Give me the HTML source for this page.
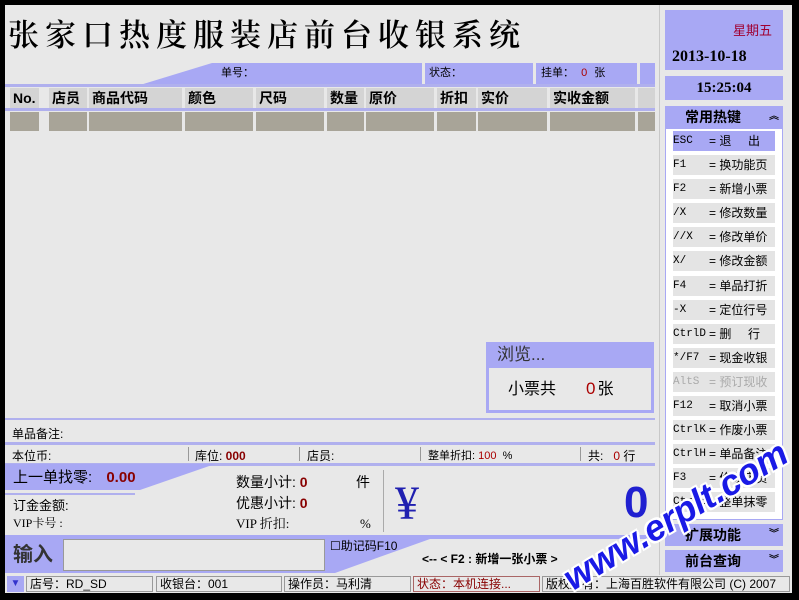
<!DOCTYPE html>
<html><head><meta charset="utf-8"><style>
*{margin:0;padding:0;box-sizing:border-box}
body{width:799px;height:600px;background:#000;position:relative;overflow:hidden;font-family:"Liberation Sans","Noto Sans CJK SC",sans-serif;font-size:12px;color:#000}
.a{position:absolute}
.p{background:#a8a8f4}
.g{background:#d4d4d4}
.d{background:#a8a498}
.hd{font-weight:bold;font-size:14px;line-height:20px;padding-left:3px}
.ln{height:3px;background:#b0b0ee}
.k{position:absolute;left:673px;width:102px;height:20px;background:#e4e4e4;font-size:11px;line-height:20px;font-family:"Liberation Mono","Noto Sans CJK SC",monospace}
.k span{position:absolute;left:36px;font-family:"Liberation Sans","Noto Sans CJK SC",sans-serif;font-size:12px}
.st{position:absolute;top:576px;height:16px;border:1px solid #999;font-size:12px;line-height:14px;padding-left:3px;background:#e8e8e8;white-space:nowrap;overflow:hidden}
</style></head><body>
<div class="a" style="left:5px;top:5px;width:787px;height:588px;background:#e8e8e8"></div>
<div class="a" style="left:659px;top:5px;width:1px;height:570px;background:#c8c8c8"></div>
<div class="a" style="left:8px;top:14px;font-family:'Noto Serif CJK SC',serif;font-weight:600;font-size:31px;letter-spacing:6px;line-height:38px;white-space:nowrap">张家口热度服装店前台收银系统</div>
<svg class="a" style="left:140px;top:63px" width="80" height="22"><polygon points="72,0 78,0 78,22 0,22" fill="#a8a8f4"/></svg>
<div class="a p" style="left:218px;top:63px;width:204px;height:21px;font-size:11px;line-height:21px;padding-left:3px">单号：</div>
<div class="a p" style="left:425px;top:63px;width:108px;height:21px;font-size:11px;line-height:21px;padding-left:4px">状态：</div>
<div class="a p" style="left:536px;top:63px;width:101px;height:21px;font-size:11px;line-height:21px;padding-left:5px">挂单： <span style="color:#a00;margin:0 4px">0</span> 张</div>
<div class="a p" style="left:640px;top:63px;width:15px;height:21px"></div>
<div class="a ln" style="left:5px;top:84px;width:650px"></div>
<div class="a g hd" style="left:10px;top:88px;width:29px">No.</div>
<div class="a g hd" style="left:49px;top:88px;width:38px">店员</div>
<div class="a g hd" style="left:89px;top:88px;width:93px">商品代码</div>
<div class="a g hd" style="left:185px;top:88px;width:68px">颜色</div>
<div class="a g hd" style="left:256px;top:88px;width:68px">尺码</div>
<div class="a g hd" style="left:327px;top:88px;width:37px">数量</div>
<div class="a g hd" style="left:366px;top:88px;width:68px">原价</div>
<div class="a g hd" style="left:437px;top:88px;width:39px">折扣</div>
<div class="a g hd" style="left:478px;top:88px;width:69px">实价</div>
<div class="a g hd" style="left:550px;top:88px;width:85px">实收金额</div>
<div class="a g" style="left:638px;top:88px;width:17px;height:20px"></div>
<div class="a ln" style="left:5px;top:108px;width:650px"></div>
<div class="a d" style="left:10px;top:112px;width:29px;height:19px"></div>
<div class="a d" style="left:49px;top:112px;width:38px;height:19px"></div>
<div class="a d" style="left:89px;top:112px;width:93px;height:19px"></div>
<div class="a d" style="left:185px;top:112px;width:68px;height:19px"></div>
<div class="a d" style="left:256px;top:112px;width:68px;height:19px"></div>
<div class="a d" style="left:327px;top:112px;width:37px;height:19px"></div>
<div class="a d" style="left:366px;top:112px;width:68px;height:19px"></div>
<div class="a d" style="left:437px;top:112px;width:39px;height:19px"></div>
<div class="a d" style="left:478px;top:112px;width:69px;height:19px"></div>
<div class="a d" style="left:550px;top:112px;width:85px;height:19px"></div>
<div class="a d" style="left:638px;top:112px;width:17px;height:19px"></div>
<div class="a" style="left:486px;top:342px;width:168px;height:71px;background:#a8a8f4"></div>
<div class="a" style="left:497px;top:344px;font-size:17px;color:#333;line-height:22px">浏览...</div>
<div class="a" style="left:489px;top:368px;width:162px;height:42px;background:#e8e8e8;font-size:16px;line-height:42px;padding-left:19px;white-space:nowrap">小票共<span style="color:#a00;margin-left:30px;margin-right:2px;font-size:17px">0</span>张</div>
<div class="a ln" style="left:5px;top:418px;width:650px;height:2px"></div>
<div class="a" style="left:12px;top:425px;font-size:12px">单品备注:</div>
<div class="a ln" style="left:5px;top:442px;width:650px"></div>
<div class="a" style="left:12px;top:447px;font-size:12px">本位币:</div>
<div class="a" style="left:188px;top:447px;height:14px;border-left:1px solid #999"></div>
<div class="a" style="left:195px;top:447px;font-size:12px">库位: <b style="color:#800">000</b></div>
<div class="a" style="left:299px;top:447px;height:14px;border-left:1px solid #999"></div>
<div class="a" style="left:307px;top:447px;font-size:12px">店员:</div>
<div class="a" style="left:420px;top:447px;height:14px;border-left:1px solid #999"></div>
<div class="a" style="left:428px;top:447px;font-size:11px">整单折扣: <span style="color:#a00">100</span> &nbsp;%</div>
<div class="a" style="left:580px;top:447px;height:14px;border-left:1px solid #999"></div>
<div class="a" style="left:588px;top:447px;font-size:12px">共: &nbsp;&nbsp;<span style="color:#a00">0</span> 行</div>
<div class="a ln" style="left:5px;top:463px;width:650px"></div>
<svg class="a" style="left:5px;top:464px" width="215" height="32"><polygon points="0,0 210,0 135,26 0,26" fill="#a8a8f4"/><rect x="0" y="29" width="130" height="2" fill="#b0b0ee"/></svg>
<div class="a" style="left:13px;top:468px;font-size:15px;line-height:20px">上一单找零: <b style="color:#800;margin-left:10px">0.00</b></div>
<div class="a" style="left:13px;top:498px;font-size:13px;line-height:16px">订金金额:</div>
<div class="a" style="left:13px;top:515px;font-size:12px;line-height:16px;font-family:'Liberation Serif','Noto Serif CJK SC',serif">VIP卡号 :</div>
<div class="a" style="left:236px;top:472px;font-size:14px;line-height:20px;width:140px">数量小计: <b style="color:#800">0</b><span style="position:absolute;left:120px">件</span></div>
<div class="a" style="left:236px;top:493px;font-size:14px;line-height:20px">优惠小计: <b style="color:#800">0</b></div>
<div class="a" style="left:236px;top:514px;font-size:13px;line-height:20px;width:140px;font-family:'Liberation Serif','Noto Serif CJK SC',serif">VIP 折扣:<span style="position:absolute;left:124px">%</span></div>
<div class="a" style="left:383px;top:470px;height:62px;border-left:1px solid #aaa"></div>
<div class="a" style="left:395px;top:476px;font-size:48px;color:#2020b0;font-family:'Liberation Serif',serif;line-height:56px">¥</div>
<div class="a" style="left:624px;top:478px;font-size:44px;font-weight:bold;color:#2020d0;line-height:50px">0</div>
<svg class="a" style="left:5px;top:535px" width="650" height="40"><polygon points="0,0 650,0 650,4 425,4 330,38 0,38" fill="#a8a8f4"/></svg>
<div class="a" style="left:13px;top:542px;font-size:20px;font-weight:bold;color:#333;line-height:26px">输入</div>
<div class="a" style="left:63px;top:539px;width:262px;height:32px;background:#e8e8e8;border:1px solid #999"></div>
<div class="a" style="left:330px;top:539px;font-size:12px;line-height:14px">☐助记码F10</div>
<div class="a" style="left:422px;top:551px;font-size:12px;font-weight:bold;line-height:16px">&lt;-- &lt; F2 : 新增一张小票 &gt;</div>
<div class="a" style="left:7px;top:576px;width:17px;height:16px;background:#a8a8f4;color:#33c;font-size:10px;text-align:center;line-height:16px">▼</div>
<div class="st" style="left:26px;width:127px">店号：RD_SD</div>
<div class="st" style="left:156px;width:126px">收银台：001</div>
<div class="st" style="left:284px;width:127px">操作员：马利清</div>
<div class="st" style="left:413px;width:127px;color:#800;border-color:#a66">状态：本机连接...</div>
<div class="st" style="left:542px;width:248px">版权所有：上海百胜软件有限公司 (C) 2007</div>
<div class="a p" style="left:665px;top:10px;width:118px;height:60px"></div>
<div class="a" style="left:733px;top:20px;color:#a00030;font-size:13px">星期五</div>
<div class="a" style="left:672px;top:48px;font-size:16px;font-weight:bold;font-family:'Liberation Serif',serif">2013-10-18</div>
<div class="a p" style="left:665px;top:76px;width:118px;height:24px;text-align:center;font-size:15px;font-weight:bold;line-height:24px;font-family:'Liberation Serif',serif">15:25:04</div>
<div class="a p" style="left:665px;top:106px;width:118px;height:22px;font-size:14px;font-weight:bold;line-height:22px;padding-left:20px">常用热键 <span style="position:absolute;left:104px;font-size:10px">︽</span></div>
<div class="a" style="left:665px;top:128px;width:118px;height:392px;background:#fff;border:1px solid #a8a8f4"></div>
<div class="k" style="top:131px;background:#a8a8f4">ESC<span>= 退 &nbsp;&nbsp;&nbsp;&nbsp;出</span></div>
<div class="k" style="top:155px">F1<span>= 换功能页</span></div>
<div class="k" style="top:179px">F2<span>= 新增小票</span></div>
<div class="k" style="top:203px">/X<span>= 修改数量</span></div>
<div class="k" style="top:227px">//X<span>= 修改单价</span></div>
<div class="k" style="top:251px">X/<span>= 修改金额</span></div>
<div class="k" style="top:276px">F4<span>= 单品打折</span></div>
<div class="k" style="top:300px">-X<span>= 定位行号</span></div>
<div class="k" style="top:324px">CtrlD<span>= 删 &nbsp;&nbsp;&nbsp;&nbsp;行</span></div>
<div class="k" style="top:348px">*/F7<span>= 现金收银</span></div>
<div class="k" style="top:372px;color:#aaa">AltS<span>= 预订现收</span></div>
<div class="k" style="top:396px">F12<span>= 取消小票</span></div>
<div class="k" style="top:420px">CtrlK<span>= 作废小票</span></div>
<div class="k" style="top:444px">CtrlH<span>= 单品备注</span></div>
<div class="k" style="top:468px">F3<span>= 修改店员</span></div>
<div class="k" style="top:492px">CtrlZ<span>= 整单抹零</span></div>
<div class="a p" style="left:665px;top:524px;width:118px;height:22px;font-size:14px;font-weight:bold;line-height:22px;padding-left:20px">扩展功能 <span style="position:absolute;left:104px;font-size:10px">︾</span></div>
<div class="a p" style="left:665px;top:550px;width:118px;height:22px;font-size:14px;font-weight:bold;line-height:22px;padding-left:20px">前台查询 <span style="position:absolute;left:104px;font-size:10px">︾</span></div>
<div class="a" style="left:556px;top:564px;font-size:36px;font-weight:bold;font-style:italic;color:#1a1ae6;transform:rotate(-31deg);transform-origin:0 0;text-shadow:2px 0 #fff,-2px 0 #fff,0 2px #fff,0 -2px #fff,2px 2px #fff,-2px -2px #fff,2px -2px #fff,-2px 2px #fff;white-space:nowrap;line-height:40px">www.erplt.com</div>
</body></html>
